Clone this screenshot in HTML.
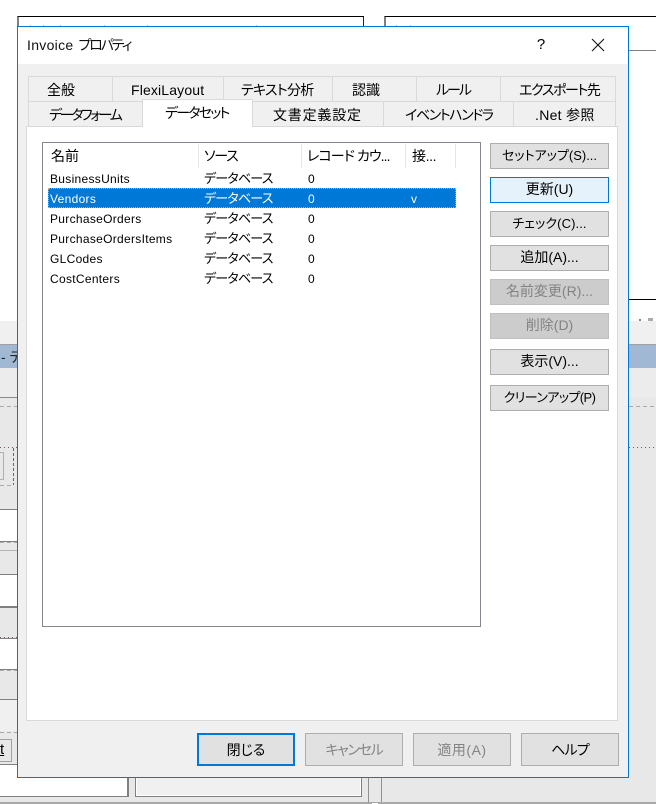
<!DOCTYPE html>
<html lang="ja">
<head>
<meta charset="utf-8">
<title>Invoice プロパティ</title>
<style>
html,body{margin:0;padding:0;background:#fff}
#p{position:relative;width:656px;height:804px;overflow:hidden;background:#fff;font-family:"Liberation Sans","Noto Sans CJK JP",sans-serif;font-size:14px;color:#000;font-feature-settings:"palt"}
#p div{position:absolute;box-sizing:border-box}
.t{white-space:nowrap;line-height:20px;height:20px}
.tab{background:#f0f0f0;border:1px solid #d9d9d9;text-align:left;font-size:14px;line-height:26px;white-space:nowrap}
.btn{left:490px;width:119px;height:26px;background:#e1e1e1;border:1px solid #adadad;text-align:center;font-size:13px;line-height:23px;white-space:nowrap}
.k{font-size:14px}
.dis{background:#ccc;border-color:#bfbfbf;color:#838383}
.bb{top:733px;height:33px;font-size:14px;line-height:32px;background:#e1e1e1;border:1px solid #adadad;text-align:center;white-space:nowrap}
.cell{font-size:12px;line-height:22px;height:22px;white-space:nowrap;letter-spacing:.3px}
.db{font-size:13px;letter-spacing:-.8px;left:204px}
.hd{font-size:14px;line-height:24px;white-space:nowrap;top:144px;height:24px}
.div{top:144px;width:1px;height:24px;background:#e5e5e5}
.h{left:0;height:1px}
.dash{height:1px;background:repeating-linear-gradient(90deg,#aaa 0 4px,transparent 4px 7px)}
.dot{height:1px;background:repeating-linear-gradient(90deg,#7a5a5a 0 1px,transparent 1px 4px)}
.tick{top:25px;width:1px;height:1px;background:#bbb}
</style>
</head>
<body>
<div id="p">
  <!-- background windows -->
  <div style="left:17px;top:16px;width:347px;height:40px;border-top:1px solid #000;border-right:1px solid #222;border-left:2px solid #808080;background:#fff"></div>
  <div style="left:384px;top:16px;width:272px;height:35px;border-top:1px solid #000;border-left:2px solid #808080;border-bottom:1px solid #808080;background:#fff"></div>
  <div class="tick" style="left:30px"></div>
  <div class="tick" style="left:43px"></div>
  <div class="tick" style="left:60px"></div>
  <div class="tick" style="left:104px"></div>
  <div class="tick" style="left:147px"></div>
  <div class="tick" style="left:256px"></div>
  <div class="tick" style="left:396px"></div>
  <div class="tick" style="left:410px"></div>
  <div style="left:629px;top:299px;width:27px;height:1px;background:#000"></div>
  <div style="left:639px;top:319px;width:2px;height:2px;background:#888"></div>
  <div style="left:648px;top:318px;width:5px;height:3px;background:#aaa"></div>
  <div style="left:0;top:321px;width:656px;height:483px;background:#e8e8e8"></div>
  <div style="left:0;top:321px;width:656px;height:23px;background:#f0f0f0"></div>
  <div style="left:0;top:344px;width:656px;height:24px;background:#a0b8d4;border-top:1px solid #a0a0a0"></div>
  <div class="t" style="left:1px;top:347px;font-size:14px;color:#222">- デ</div>
  <div style="left:0;top:368px;width:656px;height:29px;background:#ececec"></div>
  <div class="h" style="top:397px;width:18px;background:#8a8a8a"></div>
  <div class="dash" style="left:0;top:406px;width:18px"></div>
  <div class="dash" style="left:629px;top:406px;width:27px"></div>
  <div class="dot" style="left:0;top:447px;width:18px"></div>
  <div class="dot" style="left:629px;top:447px;width:27px"></div>
  <div style="left:-8px;top:452px;width:12px;height:28px;border:1px solid #b0b0b0"></div>
  <div style="left:13px;top:448px;width:1px;height:37px;background:repeating-linear-gradient(180deg,#7a5a5a 0 3px,transparent 3px 5px)"></div>
  <div class="dash" style="left:0;top:485px;width:14px"></div>
  <div class="h" style="top:509px;width:18px;background:#808080"></div>
  <div style="left:0;top:510px;width:18px;height:31px;background:#fff"></div>
  <div class="h" style="top:541px;width:18px;background:#808080"></div>
  <div class="dash" style="left:0;top:542px;width:18px"></div>
  <div class="h" style="top:550px;width:18px;background:#b5b5b5"></div>
  <div class="h" style="top:574px;width:18px;background:#808080"></div>
  <div style="left:0;top:575px;width:18px;height:31px;background:#fff"></div>
  <div style="left:0;top:606px;width:18px;height:2px;background:#808080"></div>
  <div class="dot" style="left:0;top:637px;width:18px"></div>
  <div class="h" style="top:638px;width:18px;background:#808080"></div>
  <div style="left:0;top:639px;width:18px;height:30px;background:#fff"></div>
  <div class="h" style="top:669px;width:18px;background:#808080"></div>
  <div class="dash" style="left:0;top:670px;width:18px"></div>
  <div class="h" style="top:699px;width:18px;background:#808080"></div>
  <div style="left:0;top:700px;width:18px;height:31px;background:#f0f0f0"></div>
  <div class="dash" style="left:0;top:732px;width:18px"></div>
  <div style="left:-10px;top:739px;width:22px;height:23px;border:1px solid #a0a0a0;background:#e8e8e8"></div>
  <div class="t" style="left:0;top:740px;font-size:15px;text-decoration:underline">t</div>
  <div class="h" style="top:764px;width:18px;background:#808080"></div>
  <div style="left:0;top:765px;width:129px;height:32px;background:#fff;border-right:2px solid #808080;border-bottom:1px solid #808080"></div>
  <div style="left:135px;top:770px;width:227px;height:27px;background:#f0f0f0;border:1px solid #808080;border-top:0;box-shadow:inset 0 -1px 0 #fff,inset 1px 0 0 #fff,inset -1px 0 0 #fff"></div>
  <div style="left:368px;top:770px;width:14px;height:34px;border-left:1px solid #909090;border-right:1px solid #909090"></div>
  <div style="left:0;top:802px;width:656px;height:2px;background:#a8a8a8"></div>
  <div style="left:372px;top:803px;width:6px;height:1px;background:#fff"></div>

  <!-- dialog -->
  <div style="left:17px;top:26px;width:612px;height:752px;background:#f0f0f0;border:1px solid #0078d7"></div>
  <div style="left:18px;top:27px;width:610px;height:37px;background:#fff"></div>
  <div class="t" style="left:27px;top:35px;font-size:14px;color:#111"><span style="letter-spacing:.3px">Invoice</span><span style="margin-left:5px;letter-spacing:-2.1px">プロパティ</span></div>
  <div class="t" style="left:536px;top:35px;font-size:15px;width:10px;text-align:center">?</div>
  <svg style="position:absolute;left:591px;top:38px" width="14" height="14" viewBox="0 0 14 14"><path d="M1 1L13 13M13 1L1 13" stroke="#111" stroke-width="1.1" fill="none"/></svg>

  <!-- tabs row 1 -->
  <div class="tab" style="left:28px;top:76px;width:85px;height:26px;padding-left:18px">全般</div>
  <div class="tab" style="left:112px;top:76px;width:112px;height:26px;padding-left:18px;letter-spacing:.15px">FlexiLayout</div>
  <div class="tab" style="left:223px;top:76px;width:110px;height:26px;padding-left:17px;letter-spacing:-.7px">テキスト分析</div>
  <div class="tab" style="left:332px;top:76px;width:85px;height:26px;padding-left:19px">認識</div>
  <div class="tab" style="left:416px;top:76px;width:85px;height:26px;padding-left:19px;letter-spacing:-2px">ルール</div>
  <div class="tab" style="left:500px;top:76px;width:116px;height:26px;padding-left:18px;letter-spacing:-1.4px">エクスポート先</div>
  <!-- tabs row 2 -->
  <div class="tab" style="left:28px;top:101px;width:115px;height:26px;padding-left:20px;letter-spacing:-2.4px">データフォーム</div>
  <div class="tab" style="left:252px;top:101px;width:132px;height:26px;padding-left:20px;letter-spacing:.8px">文書定義設定</div>
  <div class="tab" style="left:383px;top:101px;width:131px;height:26px;padding-left:21px;letter-spacing:-1.4px">イベントハンドラ</div>
  <div class="tab" style="left:513px;top:101px;width:103px;height:26px;padding-left:21px;letter-spacing:.3px">.Net 参照</div>
  <!-- panel -->
  <div style="left:26px;top:126px;width:592px;height:595px;background:#fff;border:1px solid #d9d9d9"></div>
  <div class="tab" style="left:142px;top:99px;width:111px;height:28px;background:#fff;border-bottom:0;line-height:26px;padding-left:22px;letter-spacing:-1.8px">データセット</div>

  <!-- list -->
  <div style="left:42px;top:142px;width:439px;height:485px;background:#fff;border:1px solid #828790"></div>
  <div class="hd" style="left:51px">名前</div>
  <div class="hd" style="left:204px;letter-spacing:-1.2px">ソース</div>
  <div class="hd" style="left:307px;letter-spacing:-.9px">レコード カウ...</div>
  <div class="hd" style="left:412px;letter-spacing:-.4px">接...</div>
  <div class="div" style="left:198px"></div>
  <div class="div" style="left:301px"></div>
  <div class="div" style="left:405px"></div>
  <div class="div" style="left:455px"></div>
  <div style="left:48px;top:188px;width:408px;height:20px;background:#0078d7;border:1px dotted #e8a060"></div>

  <div class="cell" style="left:50px;top:168px">BusinessUnits</div>
  <div class="cell" style="left:50px;top:188px;color:#fff">Vendors</div>
  <div class="cell" style="left:50px;top:208px">PurchaseOrders</div>
  <div class="cell" style="left:50px;top:228px">PurchaseOrdersItems</div>
  <div class="cell" style="left:50px;top:248px">GLCodes</div>
  <div class="cell" style="left:50px;top:268px">CostCenters</div>

  <div class="cell db" style="top:168px">データベース</div>
  <div class="cell db" style="top:188px;color:#fff">データベース</div>
  <div class="cell db" style="top:208px">データベース</div>
  <div class="cell db" style="top:228px">データベース</div>
  <div class="cell db" style="top:248px">データベース</div>
  <div class="cell db" style="top:268px">データベース</div>

  <div class="cell" style="left:308px;top:168px">0</div>
  <div class="cell" style="left:308px;top:188px;color:#fff">0</div>
  <div class="cell" style="left:308px;top:208px">0</div>
  <div class="cell" style="left:308px;top:228px">0</div>
  <div class="cell" style="left:308px;top:248px">0</div>
  <div class="cell" style="left:308px;top:268px">0</div>
  <div class="cell" style="left:411px;top:188px;color:#fff">v</div>

  <!-- side buttons -->
  <div class="btn" style="top:143px">セットアップ(S)...</div>
  <div class="btn k" style="top:177px;background:#e5f1fb;border-color:#0078d7">更新(U)</div>
  <div class="btn" style="top:211px;letter-spacing:.1px">チェック(C)...</div>
  <div class="btn k" style="top:245px">追加(A)...</div>
  <div class="btn dis k" style="top:279px">名前変更(R)...</div>
  <div class="btn dis k" style="top:313px">削除(D)</div>
  <div class="btn k" style="top:349px">表示(V)...</div>
  <div class="btn" style="top:385px;letter-spacing:-.6px">クリーンアップ(P)</div>

  <!-- bottom buttons -->
  <div class="bb" style="left:197px;width:98px;border:2px solid #0078d7;line-height:30px">閉じる</div>
  <div class="bb dis" style="left:305px;width:98px;letter-spacing:-1.3px">キャンセル</div>
  <div class="bb dis" style="left:413px;width:98px;letter-spacing:.5px">適用(A)</div>
  <div class="bb" style="left:521px;width:98px;letter-spacing:-.8px">ヘルプ</div>
</div>
</body>
</html>
